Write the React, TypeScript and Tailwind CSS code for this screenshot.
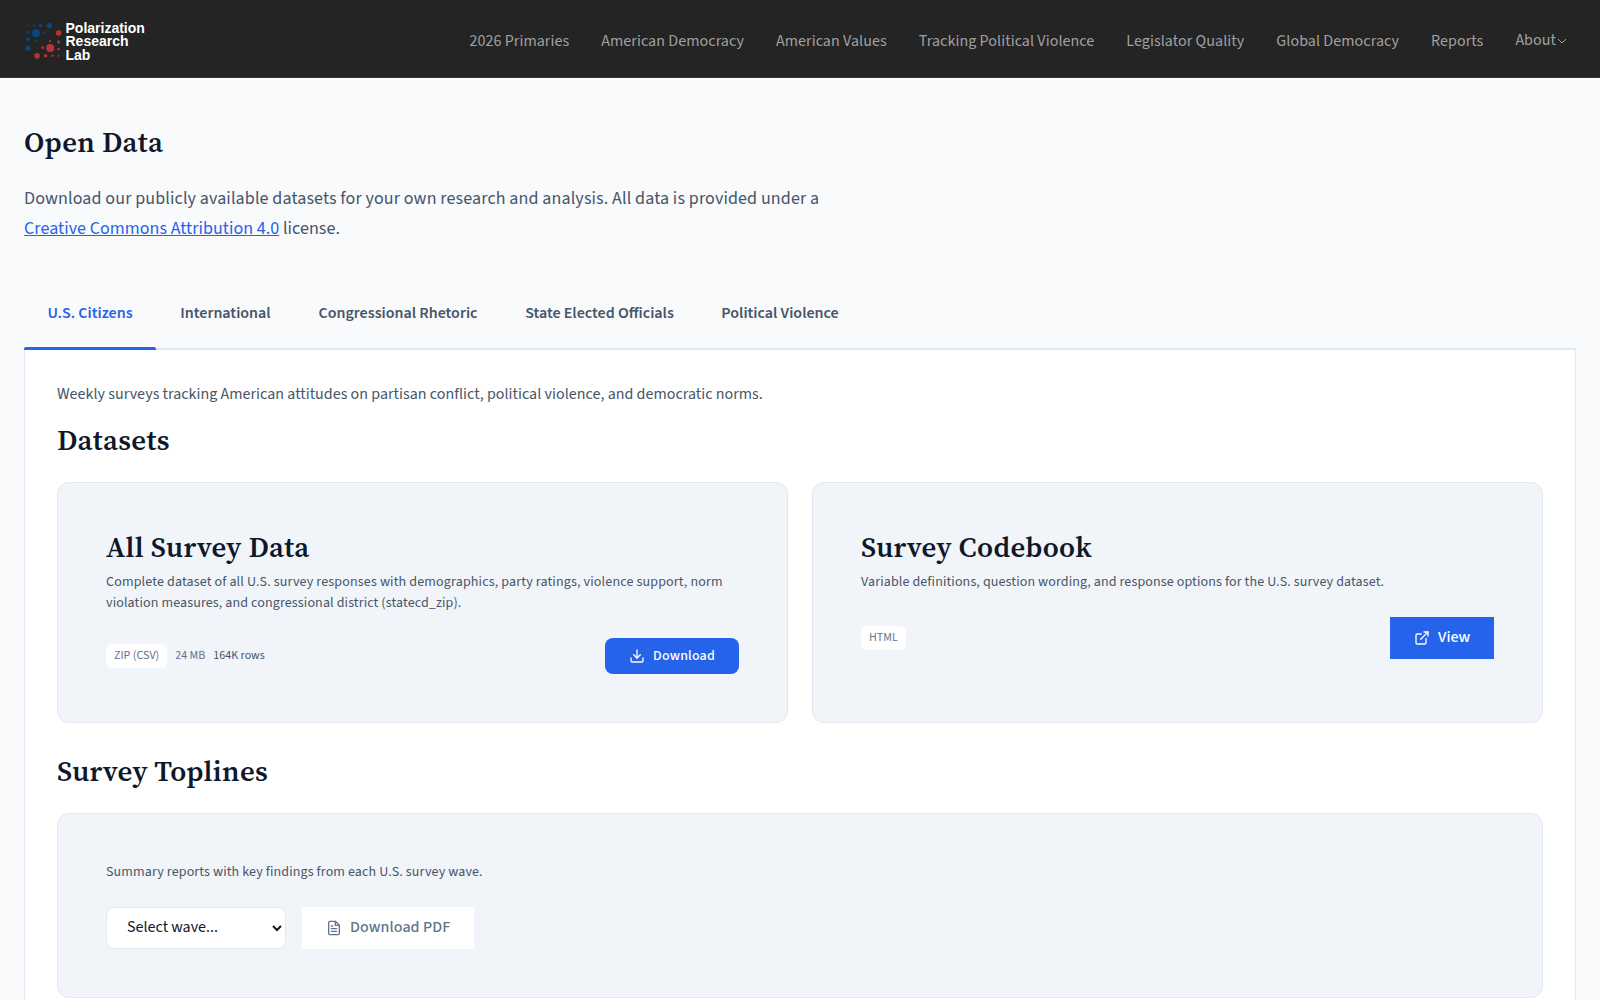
import { useState } from "react";

const navLinks = [
  "2026 Primaries",
  "American Democracy",
  "American Values",
  "Tracking Political Violence",
  "Legislator Quality",
  "Global Democracy",
  "Reports",
];

const tabs = [
  { label: "U.S. Citizens", width: "w-[132px]" },
  { label: "International", width: "w-[139px]" },
  { label: "Congressional Rhetoric", width: "w-[206px]" },
  { label: "State Elected Officials", width: "w-[197px]" },
  { label: "Political Violence", width: "w-[164px]" },
];

const heading =
  "font-['Source_Serif_4','Liberation_Serif',serif] text-[28.8px] leading-[36px] font-semibold tracking-[0.32px] text-[#0f172a]";
const small = "text-sm leading-[21px] whitespace-nowrap tracking-[0.12px] [font-feature-settings:'liga']";

// [cx, cy, r]
const blueDots = [
  [27.8, 25.6, 0.8], [34, 25.6, 1.2], [40.8, 25.5, 1.6], [49.3, 25.6, 2.6],
  [27.8, 32.3, 1.3], [36, 33.3, 4], [43.6, 33, 1.3],
  [27.8, 39.5, 1.7], [36.5, 40.8, 1.2], [27.8, 48.3, 2.7],
];
const redDots = [
  [58.6, 33, 2.8], [50, 41, 1.1], [58.6, 42, 1.6], [42.7, 47.7, 1.4],
  [50.2, 48, 4.1], [58.6, 49.1, 1.3], [37.1, 55.8, 2.8], [45.6, 55.8, 1.7],
  [52.5, 55.8, 1.3], [58.6, 55.9, 0.9],
];

function Logo() {
  return (
    <a href="#" className="flex items-center pt-[3px]">
      <svg width="39" height="38" viewBox="24 21 39 38">
        {blueDots.map(([x, y, r], i) => <circle key={i} cx={x} cy={y} r={r} fill="#0b4580" />)}
        {redDots.map(([x, y, r], i) => <circle key={i} cx={x} cy={y} r={r} fill="#b53437" />)}
      </svg>
      <span className="ml-[2.5px] pt-1 font-['Liberation_Sans',sans-serif] text-[14px] leading-[13.6px] font-bold text-white">
        Polarization<br />Research<br />Lab
      </span>
    </a>
  );
}

function DownloadIcon() {
  return (
    <svg width="16" height="16" viewBox="0 0 24 24" fill="none" stroke="currentColor" strokeWidth="2" strokeLinecap="round" strokeLinejoin="round">
      <path d="M21 15v4a2 2 0 0 1-2 2H5a2 2 0 0 1-2-2v-4" />
      <polyline points="7 10 12 15 17 10" />
      <line x1="12" y1="15" x2="12" y2="3" />
    </svg>
  );
}

function ExternalIcon() {
  return (
    <svg width="16" height="16" viewBox="0 0 24 24" fill="none" stroke="currentColor" strokeWidth="2" strokeLinecap="round" strokeLinejoin="round">
      <path d="M18 13v6a2 2 0 0 1-2 2H5a2 2 0 0 1-2-2V8a2 2 0 0 1 2-2h6" />
      <polyline points="15 3 21 3 21 9" />
      <line x1="10" y1="14" x2="21" y2="3" />
    </svg>
  );
}

function FileIcon() {
  return (
    <svg width="16" height="16" viewBox="0 0 24 24" fill="none" stroke="currentColor" strokeWidth="2" strokeLinecap="round" strokeLinejoin="round">
      <path d="M14 2H6a2 2 0 0 0-2 2v16a2 2 0 0 0 2 2h12a2 2 0 0 0 2-2V8z" />
      <polyline points="14 2 14 8 20 8" />
      <line x1="16" y1="13" x2="8" y2="13" />
      <line x1="16" y1="17" x2="8" y2="17" />
      <polyline points="10 9 9 9 8 9" />
    </svg>
  );
}

export default function App() {
  const [active, setActive] = useState("U.S. Citizens");
  const [wave, setWave] = useState("");

  return (
    <div className="h-[1000px] overflow-hidden bg-[#f9fafc] font-['Source_Sans_3','Noto_Sans_CJK_SC',sans-serif] text-[#475569]">
      <header className="flex h-[78px] items-center justify-between border-b border-[#333] bg-[#242424] pr-8 pl-6">
        <Logo />
        <nav className="flex gap-8 pt-[3px] text-base leading-6 tracking-[0.06px] whitespace-nowrap text-[#a0a0a0]">
          {navLinks.map((l) => (
            <a key={l} href="#" className="pt-px">{l}</a>
          ))}
          <a href="#" className="flex items-center pb-px">
            About
            <svg className="mt-[3px] ml-px" width="11" height="10" viewBox="0 0 11 10" fill="none" stroke="currentColor">
              <path d="M1 3l4 4 4-4" />
            </svg>
          </a>
        </nav>
      </header>

      <main className="px-6">
        <h1 className={`${heading} pt-[46px]`}>Open Data</h1>
        <p className="mt-6 text-[18px] leading-[30px] tracking-[0.05px] whitespace-nowrap">
          <span className="tracking-[0.117px]">
            Download our publicly available datasets for your own research and analysis. All data is provided under a
          </span>
          <br />
          <a href="#" className="text-[#2563eb] underline">Creative Commons Attribution 4.0</a> license.
        </p>

        <div className="mt-[41px] flex h-[65px] border-b-2 border-[#e2e8f0]">
          {tabs.map((t) => (
            <button
              key={t.label}
              onClick={() => setActive(t.label)}
              className={`${t.width} -mb-[2px] flex flex-col text-base font-semibold whitespace-nowrap ${
                active === t.label ? "text-[#2563eb]" : ""
              }`}
            >
              <span className="flex w-full flex-1 items-center justify-center pb-[6px]">{t.label}</span>
              <span className={`h-[3px] w-full rounded-t-[2px] ${active === t.label ? "bg-[#2563eb]" : ""}`} />
            </button>
          ))}
        </div>

        <section className="h-[700px] border-x border-[#e2e8f0] bg-white px-8 pt-8">
          <p className="text-base leading-6 tracking-[0.02px] [font-feature-settings:'liga']">
            Weekly surveys tracking American attitudes on partisan conflict, political violence, and democratic norms.
          </p>
          <h2 className={`${heading} mt-4`}>Datasets</h2>

          <div className="mt-6 grid grid-cols-2 gap-6">
            <div className="h-[241px] rounded-xl border border-[#e2e8f0] bg-[#f1f5f9] px-12 pt-[46px]">
              <h3 className={heading}>All Survey Data</h3>
              <p className={`${small} mt-[7px]`}>
                <span className="tracking-[0.15px]">
                  Complete dataset of all U.S. survey responses with demographics, party ratings, violence support, norm
                </span>
                <br />
                violation measures, and congressional district (statecd_zip).
              </p>
              <div className="mt-6 flex items-center justify-between">
                <div className="flex items-center gap-2 text-xs leading-4 whitespace-nowrap text-[#64748b]">
                  <span className="rounded-md bg-white px-2 py-1">ZIP (CSV)</span>
                  <span>24 MB</span>
                  <span className="text-[#475569]">164K rows</span>
                </div>
                <button className="flex h-9 w-[134px] items-center gap-2 rounded-lg bg-[#2563eb] pl-6 text-sm font-medium tracking-[0.2px] text-white">
                  <DownloadIcon />
                  Download
                </button>
              </div>
            </div>

            <div className="h-[241px] rounded-xl border border-[#e2e8f0] bg-[#f1f5f9] px-12 pt-[46px]">
              <h3 className={heading}>Survey Codebook</h3>
              <p className={`${small} mt-[7px]`}>
                Variable definitions, question wording, and response options for the U.S. survey dataset.
              </p>
              <div className="mt-6 flex items-center justify-between">
                <span className="rounded-md bg-white px-2 py-1 text-xs leading-4 text-[#64748b]">HTML</span>
                <a href="#" className="flex h-[42px] w-[104px] items-center gap-2 bg-[#2563eb] pl-6 text-base font-medium text-white">
                  <ExternalIcon />
                  <span className="pb-[2px]">View</span>
                </a>
              </div>
            </div>
          </div>

          <h2 className={`${heading} mt-[30px]`}>Survey Toplines</h2>
          <div className="mt-6 h-[185px] rounded-xl border border-[#e2e8f0] bg-[#f1f5f9] px-12 pt-12">
            <p className={small}>Summary reports with key findings from each U.S. survey wave.</p>
            <div className="mt-6 flex gap-4">
              <select
                value={wave}
                onChange={(e) => setWave(e.target.value)}
                className="h-[42px] w-[180px] rounded-lg border border-[#e2e8f0] bg-white pb-[2px] pl-4 text-base text-[#0f172a]"
              >
                <option value="">Select wave...</option>
              </select>
              <button className="flex h-[42px] w-[172px] items-center gap-2 bg-white pl-6 text-base font-medium whitespace-nowrap text-[#64748b]">
                <FileIcon />
                <span className="pb-[2px] tracking-[0.08px]">Download PDF</span>
              </button>
            </div>
          </div>
        </section>
      </main>
    </div>
  );
}
